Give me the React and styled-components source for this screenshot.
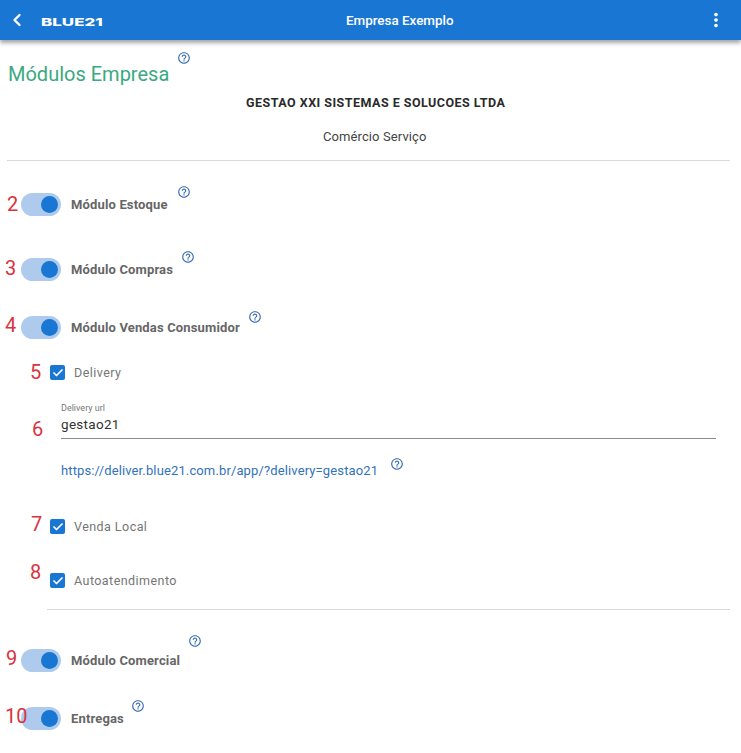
import styled, { createGlobalStyle } from 'styled-components';
import { ChevronLeft, Check } from 'lucide-react';
import { MdHelpOutline, MdMoreVert } from 'react-icons/md';

const GlobalStyle = createGlobalStyle`
  html, body {
    margin: 0;
    background: #fff;
    font-family: Roboto, "Liberation Sans", sans-serif;
  }
`;

const Help = ({ $mt, $ml }) => (
  <HelpIcon $mt={$mt} $ml={$ml}>
    <MdHelpOutline size={14} />
  </HelpIcon>
);

const Module = ({ mark, label, top, helpTop, helpLeft, markLeft, markTop }) => (
  <ModuleRow $top={top}>
    <Mark $left={markLeft} $top={markTop}>{mark}</Mark>
    <Switch>
      <Knob />
    </Switch>
    <ModuleLabel>{label}</ModuleLabel>
    <Help $mt={helpTop} $ml={helpLeft} />
  </ModuleRow>
);

const Option = ({ mark, label, top, markLeft, markTop }) => (
  <OptionRow $top={top}>
    <Mark $left={markLeft} $top={markTop}>{mark}</Mark>
    <CheckBox>
      <Check size={12} strokeWidth={3.5} color="#fff" />
    </CheckBox>
    <OptionLabel>{label}</OptionLabel>
  </OptionRow>
);

const App = () => (
  <Page>
    <GlobalStyle />
    <Header>
      <BackButton>
        <ChevronLeft size={20} strokeWidth={2.8} />
      </BackButton>
      <Logo>
        <LogoText>BLUE21</LogoText>
      </Logo>
      <HeaderTitle>Empresa Exemplo</HeaderTitle>
      <MenuButton>
        <MdMoreVert size={22} />
      </MenuButton>
    </Header>

    <TitleRow>
      <Title>Módulos Empresa</Title>
      <Help $mt={4} $ml={8} />
    </TitleRow>
    <CompanyName>GESTAO XXI SISTEMAS E SOLUCOES LTDA</CompanyName>
    <CompanyType>Comércio Serviço</CompanyType>
    <Divider $left={7} $top={15} />

    <Module mark="2" label="Módulo Estoque" top={32} helpTop={-8} helpLeft={9} markLeft={-14} markTop={-3} />
    <Module mark="3" label="Módulo Compras" top={42} helpTop={-8} helpLeft={8} markLeft={-16} markTop={-4} />
    <Module mark="4" label="Módulo Vendas Consumidor" top={35} helpTop={-6} helpLeft={8} markLeft={-16} markTop={-5} />
    <Option mark="5" label="Delivery" top={26} markLeft={-20} markTop={-7} />

    <UrlField>
      <Mark $left={-29} $top={12}>6</Mark>
      <FieldLabel>Delivery url</FieldLabel>
      <FieldValue>gestao21</FieldValue>
    </UrlField>
    <LinkRow>
      <DeliveryLink>https://deliver.blue21.com.br/app/?delivery=gestao21</DeliveryLink>
      <Help $mt={-5} $ml={12} />
    </LinkRow>

    <Option mark="7" label="Venda Local" top={41} markLeft={-19} markTop={-9} />
    <Option mark="8" label="Autoatendimento" top={39} markLeft={-20} markTop={-15} />
    <Divider $left={47} $top={21} />

    <Module mark="9" label="Módulo Comercial" top={39} helpTop={-15} helpLeft={8} markLeft={-15} markTop={-5} />
    <Module mark="10" label="Entregas" top={35} helpTop={-8} helpLeft={7} markLeft={-16} markTop={-5} />
  </Page>
);

const Page = styled.div`
  width: 741px;
  height: 753px;
  overflow: hidden;
  background: #fff;
`;

const Header = styled.header`
  height: 40px;
  background: #1976d2;
  color: #fff;
  display: flex;
  align-items: center;
  box-shadow: 0 3px 4px rgba(0, 0, 0, 0.35);
`;

const BackButton = styled.div`
  width: 20px;
  margin-left: 7px;
  display: flex;
`;

const Logo = styled.div`
  width: 62px;
  margin-left: 14px;
`;

const LogoText = styled.span`
  display: inline-block;
  font-family: Inter, sans-serif;
  font-size: 11px;
  font-weight: 800;
  line-height: 11px;
  transform: scaleX(1.54);
  transform-origin: left center;
`;

const HeaderTitle = styled.div`
  margin-left: 243px;
  width: 107px;
  font-size: 13.4px;
  font-weight: 500;
  white-space: nowrap;
`;

const MenuButton = styled.div`
  margin-left: auto;
  margin-right: 14px;
  display: flex;
`;

const HelpIcon = styled.span`
  display: flex;
  align-self: flex-start;
  margin-top: ${({ $mt }) => $mt}px;
  margin-left: ${({ $ml }) => $ml}px;
  color: #3a6cb4;
`;

const TitleRow = styled.div`
  display: flex;
  align-items: center;
  margin: 7px 0 0 8px;
  height: 40px;
`;

const Title = styled.h1`
  margin: 14px 0 0;
  font-size: 20px;
  font-weight: 400;
  color: #3aa981;
  white-space: nowrap;
`;

const CompanyName = styled.div`
  margin: 9px 0 0 0;
  padding-left: 246px;
  font-size: 12.5px;
  line-height: 14px;
  font-weight: 700;
  letter-spacing: 0.48px;
  color: #2a2a2a;
`;

const CompanyType = styled.div`
  margin-top: 19px;
  padding-left: 323px;
  font-size: 13px;
  line-height: 16px;
  letter-spacing: 0.1px;
  color: #444;
`;

const Divider = styled.hr`
  margin: ${({ $top }) => $top}px 11px 0 ${({ $left }) => $left}px;
  border: 0;
  height: 1px;
  background: #d9d9d9;
`;

const ModuleRow = styled.div`
  position: relative;
  display: flex;
  align-items: center;
  height: 23px;
  margin: ${({ $top }) => $top}px 0 0 21px;
`;

const Mark = styled.span`
  position: absolute;
  left: ${({ $left }) => $left}px;
  top: ${({ $top }) => $top}px;
  font-size: 20px;
  line-height: 28px;
  color: #d8333f;
  z-index: 2;
`;

const Switch = styled.div`
  width: 40px;
  height: 23px;
  border-radius: 12px;
  background: #aecbee;
  display: flex;
  align-items: center;
  justify-content: flex-end;
  padding-right: 3px;
  box-sizing: border-box;
`;

const Knob = styled.div`
  width: 17px;
  height: 17px;
  border-radius: 50%;
  background: #1976d2;
`;

const ModuleLabel = styled.span`
  margin-left: 10px;
  font-size: 13px;
  font-weight: 700;
  letter-spacing: 0.15px;
  color: #666;
  white-space: nowrap;
`;

const OptionRow = styled.div`
  position: relative;
  display: flex;
  align-items: center;
  height: 15px;
  margin: ${({ $top }) => $top}px 0 0 50px;
`;

const CheckBox = styled.div`
  width: 15px;
  height: 15px;
  border-radius: 2px;
  background: #1976d2;
  display: flex;
  align-items: center;
  justify-content: center;
`;

const OptionLabel = styled.span`
  margin-left: 9px;
  font-size: 12.5px;
  letter-spacing: 0.45px;
  color: #757575;
`;

const UrlField = styled.div`
  position: relative;
  margin: 23px 25px 0 61px;
  height: 35px;
  border-bottom: 1px solid #8a8a8a;
`;

const FieldLabel = styled.div`
  font-size: 9px;
  line-height: 11px;
  color: #777;
`;

const FieldValue = styled.div`
  margin-top: 2px;
  font-size: 13.5px;
  line-height: 16px;
  letter-spacing: 0.3px;
  color: #333;
`;

const LinkRow = styled.div`
  display: flex;
  align-items: center;
  height: 16px;
  margin: 23px 0 0 61px;
`;

const DeliveryLink = styled.a`
  font-size: 13px;
  letter-spacing: 0.13px;
  color: #3272bc;
  white-space: nowrap;
`;

export default App;
